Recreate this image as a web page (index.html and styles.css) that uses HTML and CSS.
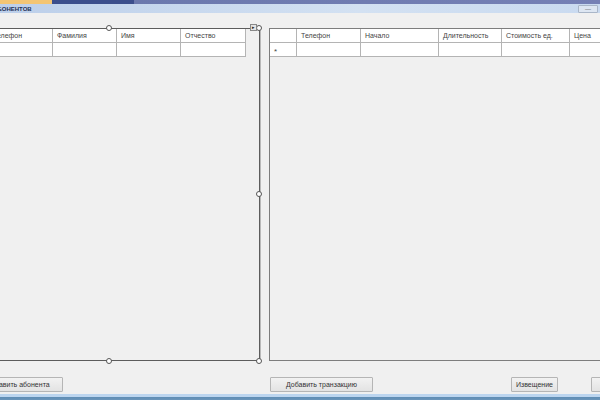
FILE: index.html
```html
<!DOCTYPE html>
<html lang="ru">
<head>
  <meta charset="UTF-8">
  <title>Абоненты</title>
  <link rel="stylesheet" href="styles.css">
</head>
<body>

<div class="topbar">
  <div class="tab-active"></div>
  <div class="tab-dark"></div>
  <div class="tab-rest"></div>
</div>

<div class="titlebar">
  <span class="title">Список абонентов</span>
  <span class="min-btn">—</span>
</div>

<div class="workspace">
  <div class="panels">
    <div class="left-frame">
      <table class="grid left-grid">
        <tr class="head">
          <td class="c64">Телефон</td>
          <td class="c64">Фамилия</td>
          <td class="c64">Имя</td>
          <td class="c65">Отчество</td>
        </tr>
        <tr class="row">
          <td></td><td></td><td></td><td></td>
        </tr>
      </table>
      <span class="handle h-top-mid"></span>
      <span class="handle h-top-right"></span>
      <span class="handle h-mid-right"></span>
      <span class="handle h-bot-mid"></span>
      <span class="handle h-bot-right"></span>
      <span class="smart-tag">▸</span>
    </div>

    <div class="right-frame">
      <table class="grid right-grid">
        <tr class="head">
          <td class="rowhead"></td>
          <td class="c64">Телефон</td>
          <td class="c78">Начало</td>
          <td class="c63">Длительность</td>
          <td class="c68">Стоимость ед.</td>
          <td class="c40">Цена</td>
        </tr>
        <tr class="row">
          <td class="rowhead"><span class="star">*</span></td>
          <td></td><td></td><td></td><td></td><td></td>
        </tr>
      </table>
    </div>
  </div>

  <div class="buttons">
    <button class="btn btn-add-sub">Добавить абонента</button>
    <button class="btn btn-add-tr">Добавить транзакцию</button>
    <button class="btn btn-notice">Извещение</button>
    <button class="btn btn-last">Выход</button>
  </div>
</div>

<div class="bottombar"></div>

</body>
</html>
```

FILE: styles.css
```css
body {
  margin: 0;
  width: 600px;
  height: 400px;
  overflow: hidden;
  background: #f0f0f0;
  font-family: 'Liberation Sans', Arial, sans-serif;
  font-size: 7px;
  color: #333;
}

/* top strip */
.topbar {
  display: flex;
  height: 4px;
}

.tab-active {
  width: 52px;
  background: #f3c574;
}

.tab-dark {
  width: 82px;
  background: #3b4e8c;
}

.tab-rest {
  flex: 1;
  background: linear-gradient(to right, #6b78ad, #7580b5);
}

.titlebar {
  height: 9px;
  display: flex;
  align-items: center;
  justify-content: space-between;
  background: linear-gradient(to right, #bccfea, #d3e1f2 60%, #c9daf0);
  overflow: hidden;
}

.title {
  margin-left: -34px;
  font-size: 6px;
  font-weight: bold;
  text-transform: uppercase;
  color: #1f2f55;
  white-space: nowrap;
}

.min-btn {
  width: 18px;
  height: 6px;
  margin-right: 2px;
  line-height: 6px;
  font-size: 6px;
  text-align: center;
  color: #555;
  background: #dde6f2;
  border: 1px solid #a9b6c8;
  border-radius: 1px;
}

/* work area */
.workspace {
  padding-top: 15px;
  overflow: hidden;
}

.panels {
  display: flex;
  height: 333px;
}

.left-frame {
  position: relative;
  flex-shrink: 0;
  width: 260px;
  margin-left: -1px;
  border: 1px solid #5c5c5c;
  border-left: none;
  box-shadow: 1px 0 0 #b9b9b9;
}

.right-frame {
  flex: 1;
  min-width: 0;
  overflow: hidden;
  margin-left: 9px;
  height: 331px;
  border: 1px solid #7d7d7d;
  border-right: none;
}

.grid {
  border-collapse: collapse;
  table-layout: fixed;
}

.grid td {
  height: 13px;
  padding: 0 4px;
  border-right: 1px solid #b4b4b4;
  border-bottom: 1px solid #b4b4b4;
  background: #fff;
  white-space: nowrap;
  overflow: hidden;
}

.grid .head td {
  color: #444;
}

.left-grid {
  margin-left: -10px;
}

.right-grid {
  width: 340px;
}

.c64 { width: 55px; }
.c65 { width: 56px; }
.c78 { width: 69px; }
.c63 { width: 54px; }
.c68 { width: 59px; }
.c40 { width: 40px; }

.grid td.rowhead {
  width: 18px;
}

.star {
  font-size: 8px;
  color: #444;
  position: relative;
  top: 2px;
}

/* designer selection overlay */
.handle {
  position: absolute;
  width: 4px;
  height: 4px;
  border: 1px solid #555;
  border-radius: 50%;
  background: #fff;
}

.h-top-mid { left: 107px; top: -4px; }
.h-top-right { left: 257px; top: -4px; }
.h-mid-right { left: 257px; top: 162px; }
.h-bot-mid { left: 107px; bottom: -4px; }
.h-bot-right { left: 257px; bottom: -4px; }

.smart-tag {
  position: absolute;
  left: 251px;
  top: -5px;
  width: 5px;
  height: 5px;
  font-size: 5px;
  line-height: 5px;
  text-align: center;
  background: #e4e4e4;
  border: 1px solid #888;
  color: #222;
}

/* buttons */
.buttons {
  display: flex;
  margin-top: 16px;
  height: 15px;
}

.btn {
  flex-shrink: 0;
  height: 15px;
  padding: 0;
  font-family: 'Liberation Sans', Arial, sans-serif;
  font-size: 7px;
  color: #333;
  background: linear-gradient(#f2f2f2, #e3e3e3);
  border: 1px solid #b5b5b5;
  border-radius: 1px;
  white-space: nowrap;
  overflow: hidden;
}

.btn-add-sub {
  width: 90px;
  margin-left: -27px;
}

.btn-add-tr {
  width: 103px;
  margin-left: 207px;
}

.btn-notice {
  width: 47px;
  margin-left: 138px;
}

.btn-last {
  width: 60px;
  margin-left: 33px;
}

.bottombar {
  margin-top: 2px;
  height: 7px;
  background: linear-gradient(#bcd5ef 0, #bcd5ef 40%, #5f8db4 45%, #6f98bd);
}
```
